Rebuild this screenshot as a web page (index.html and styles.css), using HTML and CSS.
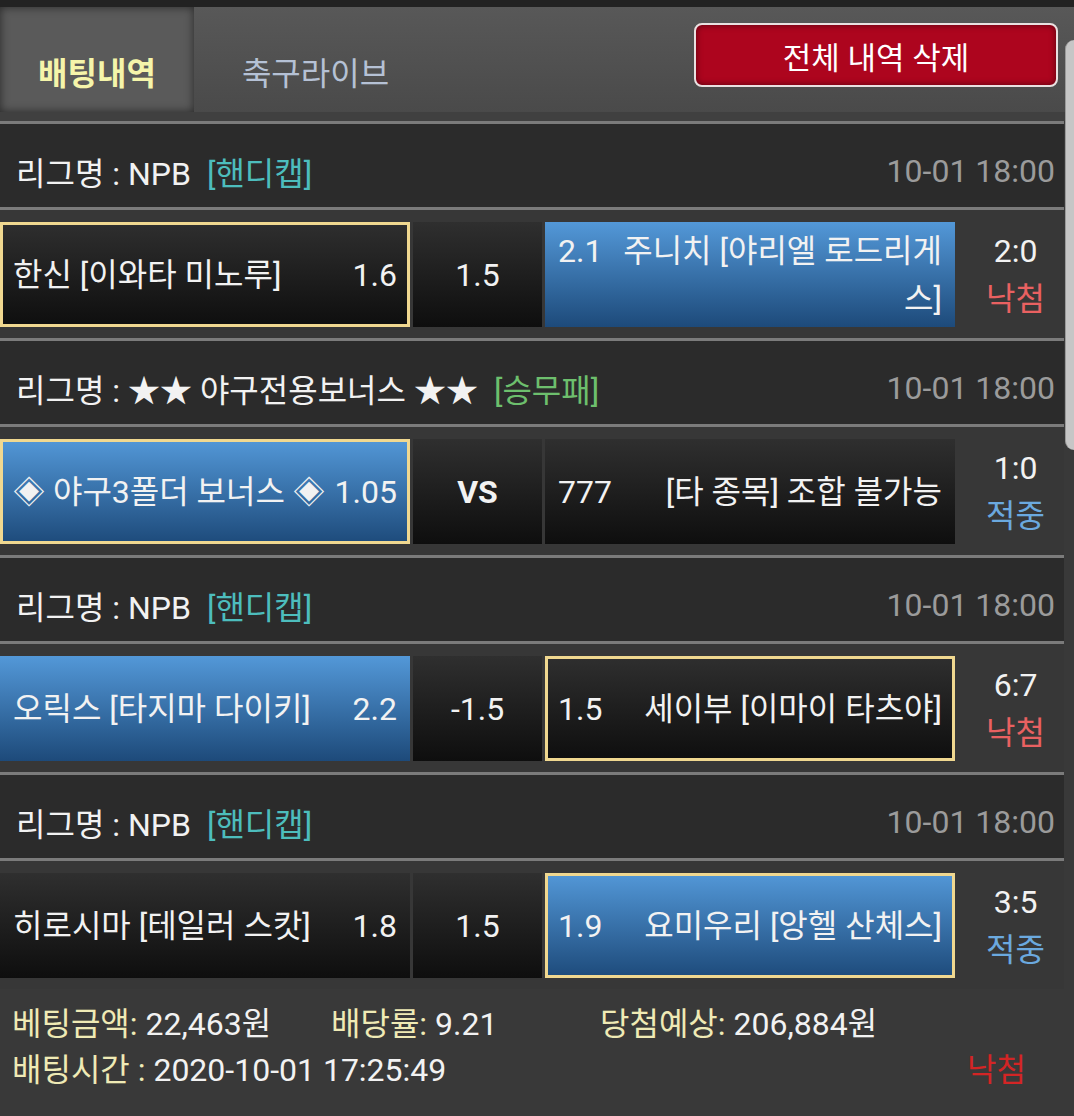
FILE: index.html
```html
<!DOCTYPE html>
<html lang="ko">

<head>
  <meta charset="UTF-8" />
  <meta name="viewport" content="width=device-width,initial-scale=1" />
  <title>배팅내역</title>
  <link rel="stylesheet" href="styles.css">
</head>

<body>
  <header class="header">
    <div class="tab on">배팅내역</div>
    <div class="tab">축구라이브</div>
    <button class="btn-del" type="button">전체 내역 삭제</button>
  </header>

  <div class="list">
    <div class="league">
      <span>리그명 : NPB</span><span class="tag">[핸디캡]</span>
      <span class="time">10-01 18:00</span>
    </div>
    <div class="match">
      <div class="cell pick">
        <div class="cell-in"><span>한신 [이와타 미노루]</span><span>1.6</span></div>
      </div>
      <div class="cell mid">1.5</div>
      <div class="cell blue away">
        <div class="cell-in"><span class="odds">2.1</span><span class="name">주니치 [야리엘 로드리게스]</span></div>
      </div>
      <div class="score"><span>2:0</span><span class="lose">낙첨</span></div>
    </div>

    <div class="league">
      <span>리그명 : ★★ 야구전용보너스 ★★</span><span class="tag green">[승무패]</span>
      <span class="time">10-01 18:00</span>
    </div>
    <div class="match">
      <div class="cell blue pick">
        <div class="cell-in"><span>◈ 야구3폴더 보너스 ◈</span><span>1.05</span></div>
      </div>
      <div class="cell mid vs">VS</div>
      <div class="cell away">
        <div class="cell-in"><span class="odds">777</span><span class="name">[타 종목] 조합 불가능</span></div>
      </div>
      <div class="score"><span>1:0</span><span class="win">적중</span></div>
    </div>

    <div class="league">
      <span>리그명 : NPB</span><span class="tag">[핸디캡]</span>
      <span class="time">10-01 18:00</span>
    </div>
    <div class="match">
      <div class="cell blue">
        <div class="cell-in"><span>오릭스 [타지마 다이키]</span><span>2.2</span></div>
      </div>
      <div class="cell mid">-1.5</div>
      <div class="cell pick away">
        <div class="cell-in"><span class="odds">1.5</span><span class="name">세이부 [이마이 타츠야]</span></div>
      </div>
      <div class="score"><span>6:7</span><span class="lose">낙첨</span></div>
    </div>

    <div class="league">
      <span>리그명 : NPB</span><span class="tag">[핸디캡]</span>
      <span class="time">10-01 18:00</span>
    </div>
    <div class="match">
      <div class="cell">
        <div class="cell-in"><span>히로시마 [테일러 스캇]</span><span>1.8</span></div>
      </div>
      <div class="cell mid">1.5</div>
      <div class="cell blue pick away">
        <div class="cell-in"><span class="odds">1.9</span><span class="name">요미우리 [앙헬 산체스]</span></div>
      </div>
      <div class="score"><span>3:5</span><span class="win">적중</span></div>
    </div>

    <div class="summary">
      <div class="sum-row">
        <span class="sum-item"><span class="k">베팅금액:</span> 22,463원</span>
        <span class="sum-item"><span class="k">배당률:</span> 9.21</span>
        <span class="sum-item"><span class="k">당첨예상:</span> 206,884원</span>
      </div>
      <div class="sum-row">
        <span><span class="k">배팅시간 :</span> 2020-10-01 17:25:49</span>
        <span class="result-lose">낙첨</span>
      </div>
    </div>
  </div>

  <div class="thumb"></div>
</body>

</html>
```

FILE: styles.css
```css
* {
  box-sizing: border-box;
  margin: 0;
  padding: 0;
}

body {
  font-family: Roboto, "Noto Sans CJK KR", sans-serif;
  font-size: 32px;
  color: #f2f2f2;
  background: #393939;
  min-height: 100vh;
  position: relative;
  overflow: hidden;
}

/* top tabs */
.header {
  display: flex;
  align-items: flex-start;
  height: 121px;
  border-top: 7px solid #222;
  border-bottom: 9px solid #404040;
  background: linear-gradient(#585858, #4a4a4a);
}

.tab {
  width: 194px;
  height: 105px;
  padding-top: 47px;
  line-height: 40px;
  text-align: center;
  color: #b5c1d5;
}

.tab + .tab {
  width: 243px;
}

.tab.on {
  background: #5a5a5a;
  box-shadow: inset 0 0 10px rgba(0, 0, 0, 0.55);
  color: #f5f5aa;
  font-weight: 700;
}

.btn-del {
  margin: 16px 16px 0 auto;
  width: 364px;
  height: 64px;
  border: 2px solid #e9e1e1;
  border-radius: 8px;
  background: #ad051e;
  box-shadow: inset 0 0 6px rgba(0, 0, 0, 0.5);
  color: #fff;
  font: inherit;
  font-size: 31px;
  cursor: pointer;
}

/* list */
.list {
  width: 1064px;
}

.league {
  display: flex;
  align-items: center;
  height: 86px;
  padding: 10px 9px 0 16px;
  border-top: 3px solid #7b7b7b;
  background: #2b2b2b;
}

.tag {
  margin-left: 16px;
  color: #4dbdbd;
}

.tag.green {
  color: #6dbf6d;
}

.time {
  margin-left: auto;
  color: #9b9b9b;
}

.match {
  display: grid;
  grid-template-columns: 410px 129px 410px 1fr;
  column-gap: 3px;
  height: 131px;
  padding: 12px 0 11px;
  border-top: 3px solid #7b7b7b;
  background: #373737;
}

.cell {
  display: flex;
  align-items: center;
  padding: 0 10px;
  border: 3px solid transparent;
  background: linear-gradient(#2f2f2f, #0e0e0e) border-box;
  line-height: 48px;
}

.cell.blue {
  background: linear-gradient(#5398d8, #1d4a7a) border-box;
}

.cell.pick {
  border-color: #f0d890;
}

.cell-in {
  display: flex;
  align-items: baseline;
  justify-content: space-between;
  width: 100%;
}

.away .odds {
  flex-shrink: 0;
  width: 58px;
}

.away .name {
  flex: 1;
  text-align: right;
}

.mid {
  justify-content: center;
}

.vs {
  font-weight: 700;
}

.score {
  display: flex;
  flex-direction: column;
  justify-content: center;
  align-items: center;
  padding-left: 9px;
  line-height: 48px;
}

.lose {
  color: #e96161;
}

.win {
  color: #6ba9df;
}

/* summary */
.summary {
  padding: 12px 38px 0 12px;
  line-height: 46px;
  white-space: nowrap;
}

.sum-row {
  display: flex;
  justify-content: space-between;
}

.sum-row:first-child {
  justify-content: flex-start;
}

.sum-item {
  width: 319px;
}

.sum-item + .sum-item {
  width: 269px;
}

.sum-item:last-child {
  width: auto;
}

.k {
  color: #efeab5;
}

.result-lose {
  color: #d32525;
}

.thumb {
  position: absolute;
  top: 40px;
  right: 0;
  width: 9px;
  height: 410px;
  border-radius: 9px 0 0 9px;
  border-left: 1px solid #9a9a9a;
  background: #c6c6c6;
}
```
